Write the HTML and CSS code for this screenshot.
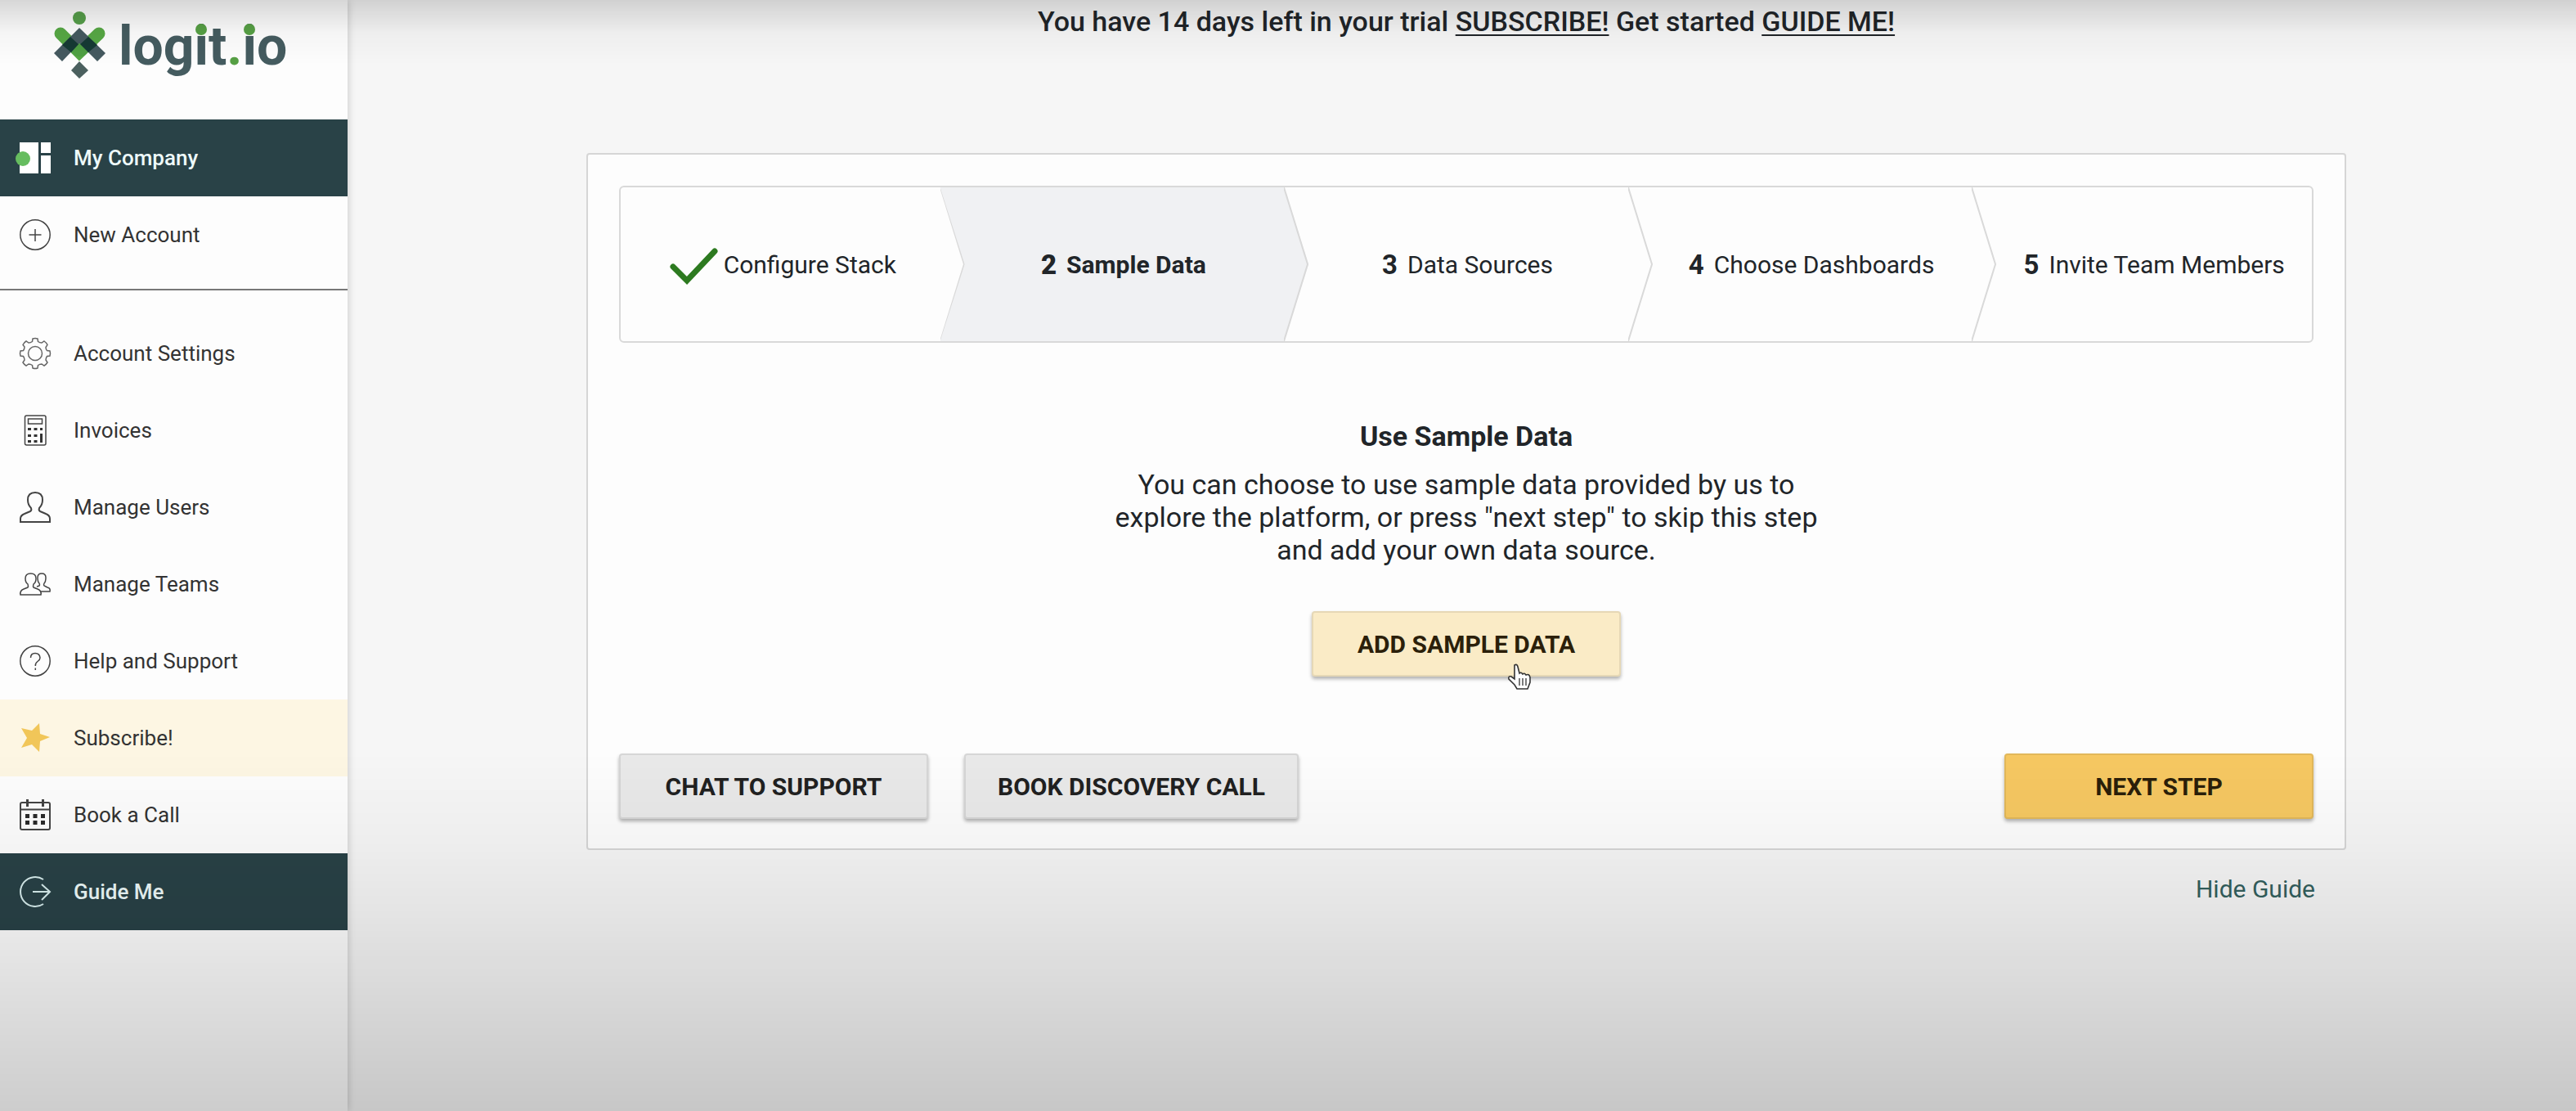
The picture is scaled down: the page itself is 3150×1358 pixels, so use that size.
FILE: index.html
```html
<!DOCTYPE html>
<html lang="en">
<head>
<meta charset="utf-8">
<meta name="viewport" content="width=device-width, initial-scale=1">
<title>Logit.io</title>
<link rel="stylesheet" href="styles.css">
</head>
<body>
<div class="layout">
  <aside class="sidebar">
    <a class="logo" href="#">
      <svg viewBox="64 12 68 86" width="68" height="86">
        <path d="M74 41 97 64 121 41" fill="none" stroke="#57a845" stroke-width="15" stroke-linecap="round"/>
        <circle cx="97" cy="22" r="8" fill="#57a04b"/>
        <path d="M97 34 129 65 119 75 97 53 76 75 66 65Z" fill="#455a60"/>
        <path d="M86 45 97 55 87 64 76 55ZM108 45 97 55 108 64 119 55Z" fill="#163b35"/>
        <path d="M97 53 107 63A10 9 0 0 1 88 63Z" fill="#4fa043"/>
        <path d="M97 75 108 86 97 96 87 86Z" fill="#4b605f"/>
      </svg>
      <span class="logo-text">log<span class="dotted">i</span>t<span class="point">.</span><span class="dotted">i</span>o</span>
    </a>
    <nav class="nav">
      <a class="nav-item dark" href="#">
        <svg class="icon" viewBox="0 0 38 38"><path d="M0 0h23v38H0ZM26 0h12v13H26ZM26 16h12v22H26Z" fill="#fff"/><circle cx="4" cy="20" r="9" fill="#66bd5f"/></svg>
        <span>My Company</span>
      </a>
      <a class="nav-item" href="#">
        <svg class="icon line" viewBox="0 0 38 38"><circle cx="19" cy="19" r="18.2"/><path d="M19 12v15M11.500 19h15"/></svg>
        <span>New Account</span>
      </a>
    </nav>
    <hr class="divider">
    <nav class="nav">
      <a class="nav-item" href="#">
        <svg class="icon line thin" viewBox="0 0 38 38"><circle cx="19" cy="19" r="8.500"/><path d="M15.500 4.500 16 1Q19 0 22 1L22.500 4.500Q24.500 6 27 6L30 4Q33 6 34 8.500L32 11.500Q32 14 33.500 15.500L37 16Q38 19 37 22L33.500 22.500Q32 24.500 32 27L34 30Q32.500 32.500 30 34L27 32Q24.500 32 22.500 33.500L22 37Q19 38 16 37L15.500 33.500Q13.500 32 11 32L8 34Q5.500 32.500 4 30L6 27Q6 24.500 4.500 22.500L1 22Q0 19 1 16L4.500 15.500Q6 13.500 6 11L4 8.500Q5.500 5.500 8 4L11 6Q13.500 6 15.500 4.500Z"/></svg>
        <span>Account Settings</span>
      </a>
      <a class="nav-item" href="#">
        <svg class="icon line" viewBox="0 0 38 38"><rect x="6.500" y="1" width="25.500" height="36" rx="2"/><rect x="10.500" y="5" width="17" height="6"/><path stroke="none" fill="#333" d="M10 16h4v3h-4zM17.500 16h4v3h-4zM25 16h3v3h-3zM10 24h4v3h-4zM17.500 24h4v3h-4zM25 23h3v11h-3zM10 31h4v3h-4zM17.500 31h4v3h-4z"/></svg>
        <span>Invoices</span>
      </a>
      <a class="nav-item" href="#">
        <svg class="icon line bold" viewBox="0 0 38 38"><path d="M1 37V33Q1 29 6 27L13 24Q15 23 14 20Q10 16 10 10Q10 1 19 1T28 10Q28 16 24 20Q23 23 25 24L32 27Q37 29 37 33V37Z"/></svg>
        <span>Manage Users</span>
      </a>
      <a class="nav-item" href="#">
        <svg class="icon line" viewBox="0 0 38 38"><path d="M1 32Q0 27 5 25L10 23Q11 22 10 19Q7 17 7 12Q7 6 13.500 6T20 12Q20 17 17 19Q16 22 17 23L22 25Q27 27 26 32ZM21 22 24 21Q25 20 24 18 22 16 22 11 22 6 27 6T32 11Q32 16 30 18 29 20 30 21L34 23Q38 24 37 28H26"/></svg>
        <span>Manage Teams</span>
      </a>
      <a class="nav-item" href="#">
        <svg class="icon line" viewBox="0 0 38 38"><circle cx="19" cy="19" r="18.200"/><path d="M13.500 15Q13.500 9.500 19 9.500T25 15Q25 17.500 22 19.500T19.300 25M19.300 27.500V30"/></svg>
        <span>Help and Support</span>
      </a>
      <a class="nav-item highlight" href="#">
        <svg class="icon" viewBox="0 0 38 38"><path d="M24 1 25 14 37 18 25 23 24 36 15 27 2 31 9 19 2 7 15 10Z" fill="#f1c659"/></svg>
        <span>Subscribe!</span>
      </a>
      <a class="nav-item" href="#">
        <svg class="icon line bold" viewBox="0 0 38 38"><rect x="1" y="4" width="36" height="33" rx="2"/><path d="M1 12.500H37"/><path stroke-width="3" d="M9.500 0V9M28.500 0V9"/><path stroke="none" fill="#2b2b2b" d="M7 18h5v5H7zM16.500 18h5v5h-5zM26 18h5v5h-5zM7 26h5v5H7zM16.500 26h5v5h-5zM26 26h5v5h-5z"/></svg>
        <span>Book a Call</span>
      </a>
      <a class="nav-item dark" href="#">
        <svg class="icon line light" viewBox="0 0 38 38"><path d="M29 4A18 18 0 1 0 29 34M16 19H37M27 10 37 19 27 29"/></svg>
        <span>Guide Me</span>
      </a>
    </nav>
  </aside>

  <main class="main">
    <p class="banner">You have 14 days left in your trial <a href="#">SUBSCRIBE!</a> Get started <a href="#">GUIDE ME!</a></p>

    <section class="card">
      <ol class="steps">
        <li class="step done">
          <svg class="check" viewBox="0 -6 60 52" width="60" height="52"><path d="M4 23 21 40 55 4"/></svg>
          <span>Configure Stack</span>
          <svg class="chevron" viewBox="0 0 30 188" preserveAspectRatio="none"><path d="M0 0 29 94 0 188"/></svg>
        </li>
        <li class="step current">
          <b>2</b><span>Sample Data</span>
          <svg class="chevron" viewBox="0 0 30 188" preserveAspectRatio="none"><path d="M0 0 29 94 0 188"/></svg>
        </li>
        <li class="step">
          <b>3</b><span>Data Sources</span>
          <svg class="chevron" viewBox="0 0 30 188" preserveAspectRatio="none"><path d="M0 0 29 94 0 188"/></svg>
        </li>
        <li class="step">
          <b>4</b><span>Choose Dashboards</span>
          <svg class="chevron" viewBox="0 0 30 188" preserveAspectRatio="none"><path d="M0 0 29 94 0 188"/></svg>
        </li>
        <li class="step">
          <b>5</b><span>Invite Team Members</span>
        </li>
      </ol>

      <div class="content">
        <h1 class="title">Use Sample Data</h1>
        <p class="text">You can choose to use sample data provided by us to explore the platform, or press "next step" to skip this step and add your own data source.</p>
        <div class="add">
          <button class="btn pale" type="button">ADD SAMPLE DATA</button>
          <svg class="cursor" viewBox="0 0 30 32" width="30" height="32"><path d="M9 2Q12 0 13 4L15 12Q17 10 19 13 21 11 23 14 27 12 28 17L28 23 25 31H12L9 26 2 19Q1 15 5 16L9 19Z" fill="#fff" stroke="#333" stroke-width="1.600"/><path d="M15 18V27M19 18V27M23 18V27" stroke="#444" stroke-width="1.400"/></svg>
        </div>
      </div>

      <div class="actions">
        <button class="btn" type="button">CHAT TO SUPPORT</button>
        <button class="btn" type="button">BOOK DISCOVERY CALL</button>
        <button class="btn gold" type="button">NEXT STEP</button>
      </div>
    </section>
    <div class="below"><a class="hide" href="#">Hide Guide</a></div>
  </main>
</div>
</body>
</html>
```
FILE: styles.css
```css
* {
  box-sizing: border-box;
}

body {
  margin: 0;
  background: #f6f6f6;
  color: #212529;
  font-family: Roboto, "Liberation Sans", sans-serif;
}

/* Soft shade along the top and bottom edges of the window */
body::after {
  content: "";
  position: fixed;
  inset: 0;
  z-index: 5;
  pointer-events: none;
  background:
    linear-gradient(rgba(0, 0, 0, .15), rgba(0, 0, 0, .03) 40px, transparent 80px),
    linear-gradient(to top, rgba(0, 0, 0, .19), rgba(0, 0, 0, .12) 138px, rgba(0, 0, 0, .07) 240px, rgba(0, 0, 0, .03) 330px, transparent 440px);
}

.layout {
  display: flex;
  min-height: 100vh;
}

.sidebar {
  flex: none;
  width: 425px;
  background: #fdfdfd;
  box-shadow: 0 0 10px rgba(0, 0, 0, .2);
}

.logo {
  display: flex;
  align-items: flex-start;
  gap: 13px;
  height: 146px;
  padding: 12px 0 0 64px;
  text-decoration: none;
}

.logo-text {
  padding-top: 12px;
  color: #455c60;
  font-size: 66px;
  font-weight: 700;
  line-height: 66px;
}

.dotted {
  position: relative;
}

/* Green dot of the letter i */
.dotted::after {
  content: "";
  position: absolute;
  top: 11px;
  left: calc(50% - 7px);
  width: 14px;
  height: 14px;
  border-radius: 50%;
  background: #57a045;
}

.point {
  color: #57a045;
}

.nav-item {
  display: flex;
  align-items: center;
  gap: 28px;
  height: 94px;
  padding-left: 24px;
  color: #333;
  font-size: 26px;
  text-decoration: none;
}

.nav-item.dark {
  background: #294247;
  color: #eefafa;
  font-weight: 500;
}

.nav-item.highlight {
  background: #fdf6e3;
}

.icon {
  width: 38px;
  height: 38px;
  overflow: visible;
}

.icon.line {
  fill: none;
  stroke: #444;
  stroke-width: 1.5;
}

.icon.thin {
  stroke: #666;
}

.icon.bold {
  stroke-width: 2;
}

.icon.light {
  stroke: #d8eeee;
  stroke-width: 2;
}

.divider {
  height: 2px;
  margin: 19px 0 30px;
  border: 0;
  background: #777;
}

.main {
  display: flex;
  flex: 1;
  flex-direction: column;
  align-items: center;
  padding: 6px 0 0 11px;
}

.banner {
  margin: 0 0 141px;
  font-size: 34px;
  font-weight: 500;
  line-height: 40px;
}

.banner a {
  color: inherit;
  text-decoration-thickness: 2px;
  text-underline-offset: 4px;
}

.card {
  width: min(80%, 2152px);
  padding: 38px 38px 36px;
  border: 2px solid #d6d6d6;
  border-radius: 4px;
  background: #fdfdfd;
}

.steps {
  display: grid;
  grid-template-columns: repeat(4, 1fr) calc(20% - 28px);
  height: 192px;
  margin: 0;
  padding: 0;
  border: 2px solid #d9d9d9;
  border-radius: 6px;
  list-style: none;
  font-size: 30px;
}

.step {
  position: relative;
  z-index: 0;
  display: flex;
  align-items: center;
  justify-content: center;
  gap: 12px;
  padding-right: 32px;
  white-space: nowrap;
}

.step.done {
  padding-right: 24px;
}

.step:last-child {
  padding-right: 0;
}

.step b {
  font-size: 33px;
}

.step.current {
  font-weight: 700;
}

.step.current::before {
  content: "";
  position: absolute;
  inset: 0 0 0 -30px;
  z-index: -1;
  background: #f0f1f3;
  clip-path: polygon(0 0, calc(100% - 30px) 0, 100% 50%, calc(100% - 30px) 100%, 0 100%, 30px 50%);
}

.chevron {
  position: absolute;
  top: 0;
  right: 0;
  width: 30px;
  height: 100%;
  fill: none;
  stroke: #d9d9d9;
  stroke-width: 2;
}

.check {
  margin-right: -6px;
  fill: none;
  stroke: #2d7a20;
  stroke-width: 7;
  stroke-linecap: round;
}

.content {
  display: flex;
  flex-direction: column;
  align-items: center;
  padding: 94px 0;
  text-align: center;
}

.title {
  margin: 0 0 19px;
  font-size: 34px;
  font-weight: 700;
  line-height: 40px;
}

.text {
  max-width: 880px;
  margin: 0 0 55px;
  font-size: 34px;
  line-height: 40px;
}

.add {
  position: relative;
}

.cursor {
  position: absolute;
  top: 64px;
  left: 239px;
}

.btn {
  min-width: 378px;
  height: 80px;
  padding: 0 39px;
  border: 2px solid rgba(0, 0, 0, .08);
  border-radius: 4px;
  background: #e9e9e9;
  box-shadow: 0 3px 4px rgba(0, 0, 0, .3);
  color: #212121;
  font: 700 30px Roboto, "Liberation Sans", sans-serif;
}

.btn.pale {
  background: #faebc6;
  color: #2b1f0a;
}

.btn.gold {
  margin-left: auto;
  background: #f6c862;
  color: #2b1f0a;
}

.actions {
  display: flex;
  gap: 44px;
}

.below {
  display: flex;
  justify-content: flex-end;
  width: min(80%, 2152px);
  padding: 28px 38px;
}

.hide {
  color: #33605e;
  font-size: 30px;
  line-height: 40px;
  text-decoration: none;
}
```
